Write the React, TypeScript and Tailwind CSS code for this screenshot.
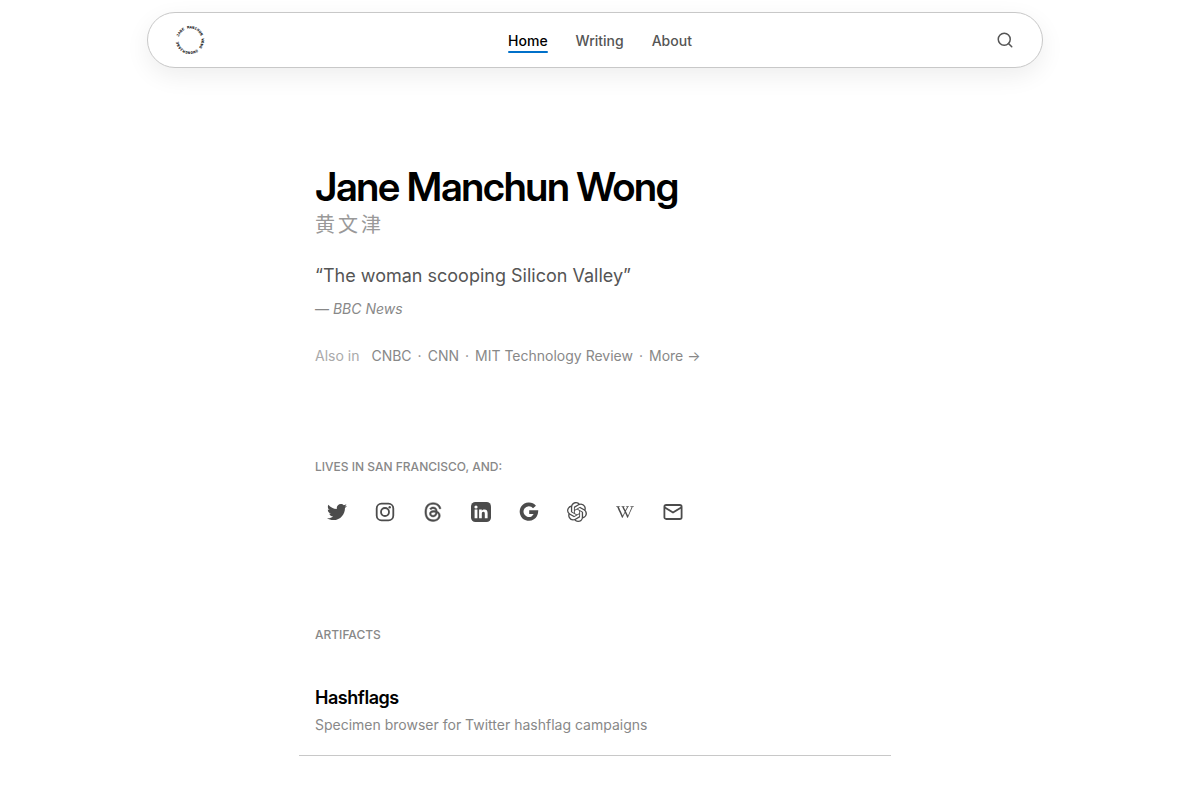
import type { ReactNode } from "react";
import { Search } from "lucide-react";
import { FaTwitter } from "react-icons/fa";
import { FaThreads } from "react-icons/fa6";
import { SiOpenai, SiWikipedia } from "react-icons/si";

const navLinks = [
  { label: "Home", active: true },
  { label: "Writing", active: false },
  { label: "About", active: false },
];

const press = ["CNBC", "CNN", "MIT Technology Review", "More →"];

const socials: { label: string; icon: ReactNode }[] = [
  { label: "Twitter", icon: <FaTwitter size={20} /> },
  {
    label: "Instagram",
    icon: (
      <svg width="20" height="20" viewBox="0 0 20 20" fill="none" stroke="currentColor" strokeWidth="1.8">
        <rect x="1.7" y="1.7" width="16.6" height="16.6" rx="4.8" />
        <circle cx="10" cy="10" r="4" />
        <circle cx="14.7" cy="5.3" r="1.2" fill="currentColor" stroke="none" />
      </svg>
    ),
  },
  { label: "Threads", icon: <FaThreads size={20} className="overflow-visible stroke-current [stroke-width:12px]" /> },
  {
    label: "LinkedIn",
    icon: (
      <svg width="20" height="20" viewBox="0 0 20 20">
        <rect width="20" height="20" rx="4.4" fill="currentColor" />
        <circle cx="5" cy="5" r="1.6" fill="#fff" />
        <path
          d="M3.600 7.600h2.800v8.600H3.600zM8.100 7.600h2.700v1.200c.5-.9 1.500-1.400 2.700-1.400 2.400 0 3.100 1.600 3.100 3.900v4.900h-2.800v-4.300c0-1.300-.3-2.100-1.400-2.100-1.200 0-1.600.8-1.600 2.100v4.300H8.100z"
          fill="#fff"
        />
      </svg>
    ),
  },
  {
    label: "Google",
    icon: (
      <svg width="20" height="20" viewBox="0 0 20 20" fill="none" stroke="currentColor" strokeWidth="3.8">
        <path d="M15.500 4.900A7.300 7.300 0 1 0 17.200 10.200H10.200" />
      </svg>
    ),
  },
  { label: "OpenAI", icon: <SiOpenai size={20} /> },
  { label: "Wikipedia", icon: <SiWikipedia size={18} /> },
  {
    label: "Email",
    icon: (
      <svg width="20" height="20" viewBox="0 0 20 20" fill="none" stroke="currentColor" strokeWidth="1.8" strokeLinejoin="round">
        <rect x="1.400" y="3" width="17.200" height="14" rx="1.800" />
        <path d="M1.800 5.400 10 10.600l8.200-5.200" />
      </svg>
    ),
  },
];

function Logo() {
  return (
    <svg width="32" height="32" viewBox="0 0 32 32" role="img" aria-label="Jane Manchun Wong">
      <defs>
        <path id="ring" d="M4.500 16a11.500 11.500 0 0 1 23 0a11.500 11.500 0 0 1 -23 0" />
      </defs>
      <text className="fill-black font-['Liberation_Mono',monospace] text-[4px] font-bold">
        <textPath href="#ring" startOffset="3">
          JANE MANCHUN WONG @WONGMJANE
        </textPath>
      </text>
    </svg>
  );
}

export default function App() {
  return (
    <div className="min-h-screen bg-white pr-[10px] font-['Inter','Noto_Sans_CJK_SC',sans-serif] text-black">
      <header className="px-4 pt-3">
        <nav className="mx-auto flex h-14 max-w-4xl items-center justify-between rounded-full border border-[#c8c8c8] bg-white px-[26px] shadow-[0_8px_24px_rgba(0,0,0,0.07)]">
          <a href="#home" aria-label="Jane Manchun Wong">
            <Logo />
          </a>
          <div className="flex gap-7">
            {navLinks.map((l) => (
              <a
                key={l.label}
                href={`#${l.label.toLowerCase()}`}
                className={
                  l.active
                    ? "relative pt-0.5 text-sm leading-5 font-medium text-black after:absolute after:inset-x-0 after:top-full after:h-0.5 after:rounded-full after:bg-[#0070c9] after:content-['']"
                    : "pt-0.5 text-sm leading-5 font-medium text-[#555]"
                }
              >
                {l.label}
              </a>
            ))}
          </div>
          <button type="button" aria-label="Search" className="flex h-11 w-[22px] items-center justify-center text-[#555]">
            <Search size={18} strokeWidth={2} />
          </button>
        </nav>
      </header>

      <main className="mx-auto max-w-[592px] px-4 pt-24">
        <h1 className="font-['Inter_Display','Inter',sans-serif] text-[40px] leading-[46px] font-semibold tracking-[-0.03em]">
          Jane Manchun Wong
        </h1>
        <p lang="zh" className="text-xl leading-[30px] tracking-[3px] text-[#999]">
          黄文津
        </p>

        <blockquote className="pt-5">
          <p className="text-lg leading-8 text-[#555]">“The woman scooping Silicon Valley”</p>
          <footer className="pt-1 text-sm leading-[26px] text-[#888]">
            — <cite>BBC News</cite>
          </footer>
        </blockquote>

        <p className="flex flex-wrap pt-6 text-sm leading-5 text-[#888]">
          <span className="mr-3 text-[#aaa]">Also in</span>
          {press.map((p, i) => (
            <span key={p}>
              {i > 0 && <span className="px-1.5">·</span>}
              <a href="#press">{p}</a>
            </span>
          ))}
        </p>

        <section className="pt-[93px]">
          <h2 className="text-xs leading-4 font-medium text-[#888]">LIVES IN SAN FRANCISCO, AND:</h2>
          <ul className="flex flex-wrap gap-1 pt-[15px]">
            {socials.map((s) => (
              <li key={s.label}>
                <a href="#social" aria-label={s.label} className="flex size-11 items-center justify-center text-[#4c4c4c]">
                  {s.icon}
                </a>
              </li>
            ))}
          </ul>
        </section>

        <section className="pt-[93px]">
          <h2 className="text-xs leading-4 font-medium text-[#888]">ARTIFACTS</h2>
          <a href="#hashflags" className="-mx-4 mt-6 block border-b border-[#c8c8c8] px-4 py-[17px]">
            <h3 className="text-lg leading-7 font-semibold tracking-tight">Hashflags</h3>
            <p className="text-sm leading-[26px] text-[#888]">Specimen browser for Twitter hashflag campaigns</p>
          </a>
        </section>
      </main>
    </div>
  );
}
